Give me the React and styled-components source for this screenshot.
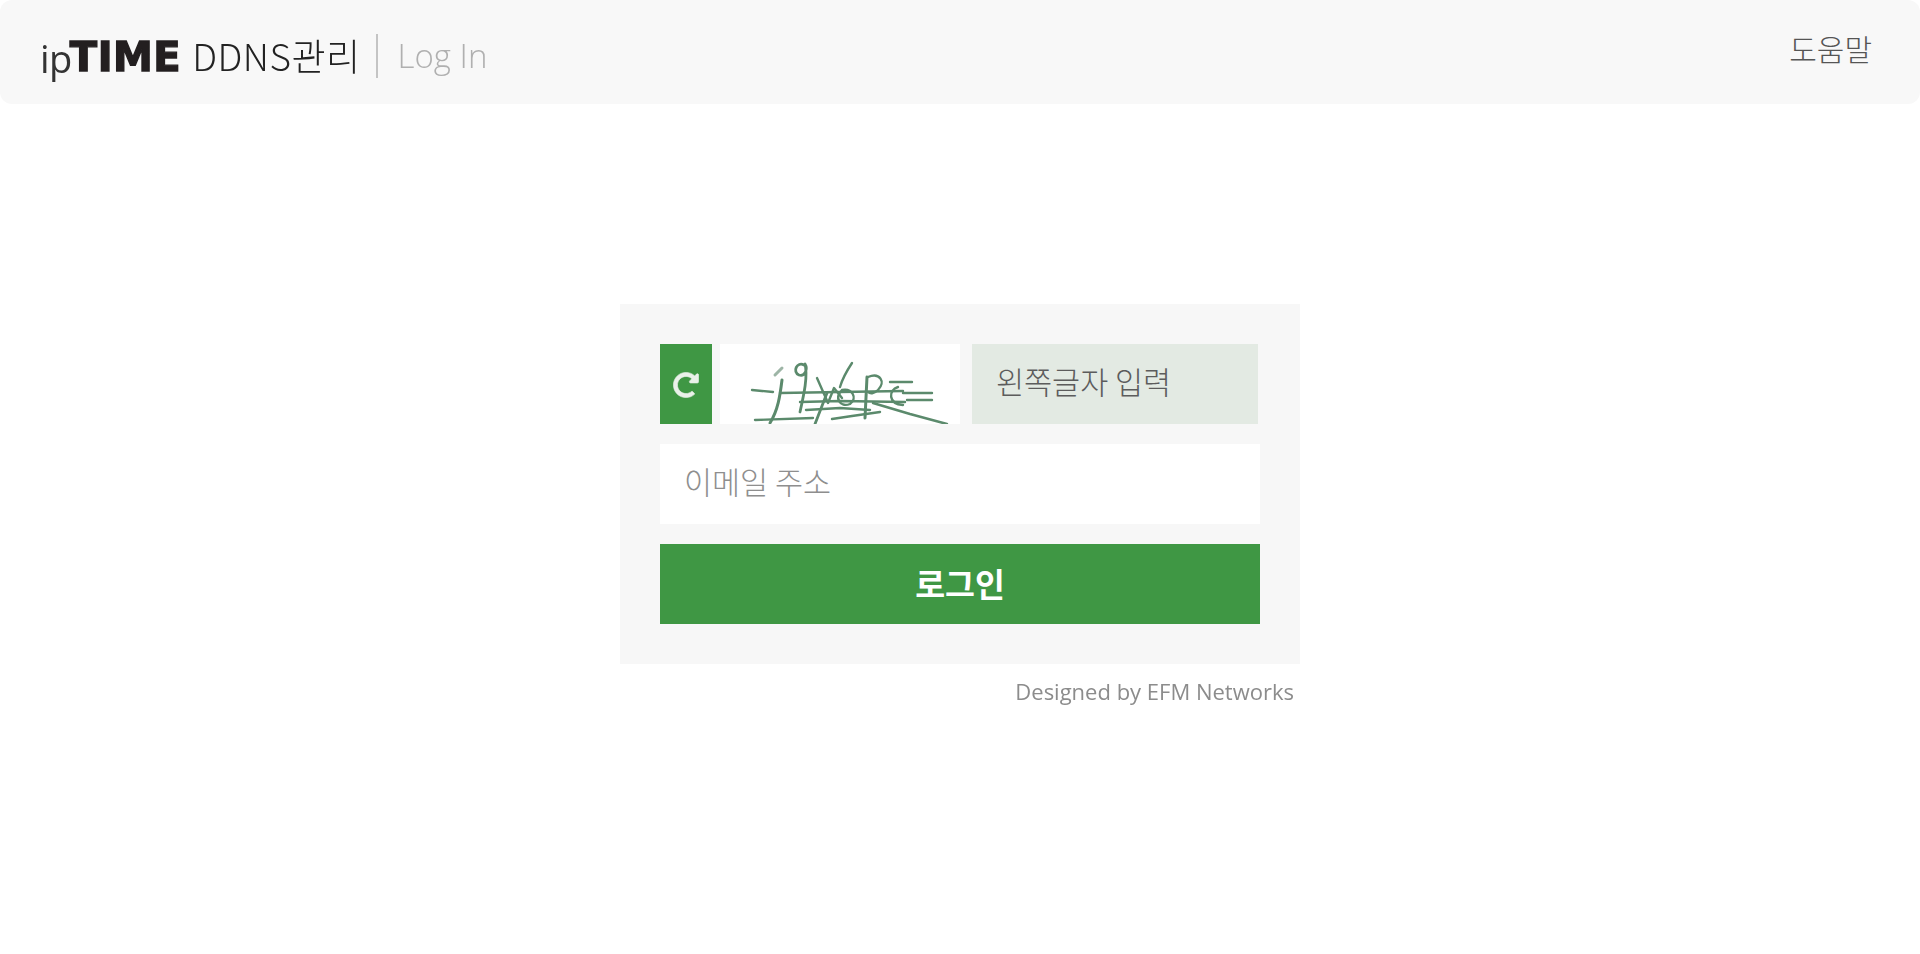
import React from 'react';
import styled, { createGlobalStyle } from 'styled-components';
import { FaRedoAlt } from 'react-icons/fa';

const FONT = '"Noto Sans CJK KR", "Open Sans", sans-serif';

const GlobalStyle = createGlobalStyle`
  html, body {
    margin: 0;
    padding: 0;
    background: #fff;
    font-family: ${FONT};
  }
  * {
    box-sizing: border-box;
  }
`;

const Header = styled.header`
  display: flex;
  align-items: center;
  justify-content: space-between;
  height: 104px;
  padding: 0 48px 0 40px;
  background: #f8f8f8;
  border-radius: 12px;
`;

const Brand = styled.div`
  display: flex;
  align-items: center;
  margin-top: 7px;
  filter: blur(0.5px);
`;

const LogoSmall = styled.span`
  font-family: "Open Sans", sans-serif;
  font-size: 38px;
  line-height: 1;
  color: #333;
  letter-spacing: -0.5px;
  margin-top: 4px;
`;

const LogoHeavy = styled.span`
  font-family: "DejaVu Sans", sans-serif;
  font-size: 40px;
  font-weight: 700;
  line-height: 1;
  color: #231f20;
  -webkit-text-stroke: 1.4px #231f20;
  letter-spacing: 0.5px;
  margin: 2px 0 0 -2px;
`;

const Title = styled.span`
  margin-left: 11px;
  font-size: 37px;
  font-weight: 300;
  line-height: 1;
  color: #222;
  letter-spacing: 0.5px;
`;

const Divider = styled.span`
  width: 2px;
  height: 44px;
  margin: 0 20px 0 15px;
  background: #c4c4c4;
`;

const PageName = styled.span`
  font-family: "Open Sans", sans-serif;
  font-size: 33px;
  font-weight: 300;
  line-height: 1;
  color: #b0b0b0;
`;

const HelpLink = styled.a`
  margin-top: -8px;
  font-size: 30px;
  font-weight: 300;
  color: #555;
`;

const Main = styled.main`
  width: 680px;
  margin: 200px auto 0;
`;

const Card = styled.form`
  display: flex;
  flex-direction: column;
  gap: 20px;
  padding: 40px;
  background: #f7f7f7;
`;

const CaptchaRow = styled.div`
  display: flex;
  height: 80px;
`;

const RefreshButton = styled.button`
  display: flex;
  align-items: center;
  justify-content: center;
  flex: 0 0 52px;
  padding: 2px 0 0;
  border: 0;
  background: #3f9744;
  color: #e9f1e9;
  font-size: 26px;

  svg {
    stroke: currentColor;
    stroke-width: 12px;
    filter: blur(0.7px);
  }
`;

const CaptchaImage = styled.svg`
  display: block;
  flex: 0 0 240px;
  height: 80px;
  margin: 0 12px 0 8px;
  background: #fff;
`;

const Field = styled.input`
  display: block;
  width: ${({ $width }) => $width};
  height: 80px;
  padding: 0 24px 6px;
  border: 0;
  outline: 0;
  background: ${({ $bg }) => $bg};
  font-family: ${FONT};
  font-size: 30.5px;
  font-weight: 300;
  color: #555;

  &::placeholder {
    color: ${({ $placeholder }) => $placeholder};
    opacity: 1;
  }
`;

const LoginButton = styled.button`
  display: block;
  width: 100%;
  height: 80px;
  padding: 0 0 4px;
  border: 0;
  background: #3f9744;
  font-family: ${FONT};
  font-size: 32.5px;
  font-weight: 700;
  color: #fff;
`;

const Credit = styled.p`
  margin: 12px 6px 0 0;
  font-family: "Open Sans", sans-serif;
  font-size: 22px;
  line-height: 30px;
  text-align: right;
  color: #8c8c8c;
  filter: blur(0.5px);
`;

const CaptchaStrokes = () => (
  <g fill="none" stroke="#5b8a6c" strokeWidth="2.4" strokeLinecap="round" strokeLinejoin="round" style={{ filter: 'blur(0.7px)' }}>
    <path d="M32 46 L53 48" />
    <path d="M60 49 L120 48 L183 47" />
    <path d="M183 49 L212 49 M187 56 L212 56" />
    <path d="M80 58 L120 57 L185 58" />
    <path d="M86 66 L120 64 L150 66" />
    <path d="M35 76 L93 74 M112 75 L132 72 M132 72 L160 68" />
    <path d="M153 59 L190 70 L227 80" />
    <path d="M62 36 C60 52 58 66 50 79" strokeWidth="3" />
    <path d="M55 31 L62 24" stroke="#9db5a6" strokeWidth="3" />
    <path d="M84 21 C77 17 72 28 79 31 C85 33 88 25 85 20 C88 32 84 50 80 68" strokeWidth="2.8" />
    <path d="M97 34 L108 59 L114 44 L122 54" />
    <path d="M132 19 C126 28 122 36 120 43" />
    <path d="M122 46 C132 44 138 54 130 60 C120 64 114 54 122 46" />
    <path d="M107 49 L95 80" strokeWidth="2.8" />
    <path d="M147 33 L145 74" strokeWidth="3" />
    <path d="M148 33 C160 28 166 38 158 46 C154 50 150 50 148 48" />
    <path d="M170 38 L192 38" />
    <path d="M178 43 C168 46 168 60 183 61" />
  </g>
);

const App = () => (
  <>
    <GlobalStyle />
    <Header>
      <Brand>
        <LogoSmall>ip</LogoSmall>
        <LogoHeavy>TIME</LogoHeavy>
        <Title>DDNS관리</Title>
        <Divider />
        <PageName>Log In</PageName>
      </Brand>
      <HelpLink>도움말</HelpLink>
    </Header>
    <Main>
      <Card>
        <CaptchaRow>
          <RefreshButton type="button" aria-label="새로고침">
            <FaRedoAlt />
          </RefreshButton>
          <CaptchaImage viewBox="0 0 240 80">
            <CaptchaStrokes />
          </CaptchaImage>
          <Field $width="286px" $bg="#e3eae3" $placeholder="#5c5c5c" placeholder="왼쪽글자 입력" />
        </CaptchaRow>
        <Field $width="100%" $bg="#fff" $placeholder="#8e8e8e" placeholder="이메일 주소" />
        <LoginButton type="button">로그인</LoginButton>
      </Card>
      <Credit>Designed by EFM Networks</Credit>
    </Main>
  </>
);

export default App;
